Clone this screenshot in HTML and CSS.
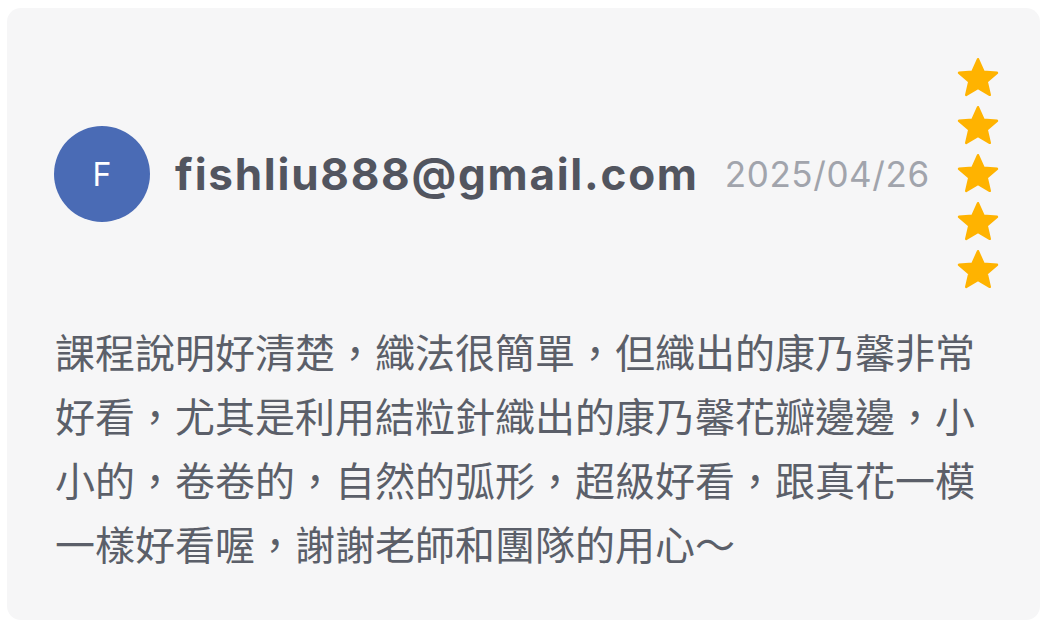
FILE: index.html
```html
<!DOCTYPE html>
<html lang="zh-Hant">
<head>
  <meta charset="UTF-8">
  <title>課程評價</title>
  <link rel="stylesheet" href="styles.css">
</head>
<body>

  <div class="review-card">
    <div class="review-head">
      <div class="avatar">F</div>
      <div class="user-name">fishliu888@gmail.com</div>
      <div class="review-date">2025/04/26</div>

      <div class="stars">
        <svg class="star" viewBox="0 0 24 24"><path d="M12 2.6l2.75 6.2 6.75.6-5.12 4.45 1.53 6.6L12 17l-5.91 3.45 1.53-6.6L2.5 9.4l6.75-.6z"/></svg>
        <svg class="star" viewBox="0 0 24 24"><path d="M12 2.6l2.75 6.2 6.75.6-5.12 4.45 1.53 6.6L12 17l-5.91 3.45 1.53-6.6L2.5 9.4l6.75-.6z"/></svg>
        <svg class="star" viewBox="0 0 24 24"><path d="M12 2.6l2.75 6.2 6.75.6-5.12 4.45 1.53 6.6L12 17l-5.91 3.45 1.53-6.6L2.5 9.4l6.75-.6z"/></svg>
        <svg class="star" viewBox="0 0 24 24"><path d="M12 2.6l2.75 6.2 6.75.6-5.12 4.45 1.53 6.6L12 17l-5.91 3.45 1.53-6.6L2.5 9.4l6.75-.6z"/></svg>
        <svg class="star" viewBox="0 0 24 24"><path d="M12 2.6l2.75 6.2 6.75.6-5.12 4.45 1.53 6.6L12 17l-5.91 3.45 1.53-6.6L2.5 9.4l6.75-.6z"/></svg>
      </div>
    </div>

    <p class="review-text">課程說明好清楚，織法很簡單，但織出的康乃馨非常好看，尤其是利用結粒針織出的康乃馨花瓣邊邊，小小的，卷卷的，自然的弧形，超級好看，跟真花一模一樣好看喔，謝謝老師和團隊的用心～</p>
  </div>

</body>
</html>
```

FILE: styles.css
```css
body {
  margin: 0;
  padding: 8px 2px 6px 7px;
  background: #fff;
  font-family: Inter, "Noto Sans CJK TC", sans-serif;
}

.review-card {
  height: 612px;
  box-sizing: border-box;
  padding: 46px 38px 0 47px;
  background-color: #f6f6f7;
  border-radius: 14px;
}

.review-head {
  display: flex;
  align-items: center;
}

.avatar {
  width: 96px;
  height: 96px;
  border-radius: 50%;
  background-color: #4a6bb5;
  color: #fff;
  font-size: 32px;
  display: flex;
  align-items: center;
  justify-content: center;
  flex-shrink: 0;
}

.user-name {
  margin-left: 25px;
  font-size: 44px;
  font-weight: 700;
  letter-spacing: 1.75px;
  color: #52555f;
}

.review-date {
  margin-left: 26px;
  font-size: 35px;
  letter-spacing: 0.6px;
  color: #a1a4ac;
}

.stars {
  margin-left: auto;
  display: flex;
  flex-direction: column;
}

.star {
  width: 48px;
  height: 48px;
  display: block;
}

.star path {
  fill: #ffb300;
  stroke: #ffb300;
  stroke-width: 1.2;
  stroke-linejoin: round;
}

.review-text {
  margin: 25px 0 0 1px;
  font-family: "Noto Sans CJK TC", sans-serif;
  font-size: 40px;
  line-height: 64px;
  color: #5b5f69;
}
```
